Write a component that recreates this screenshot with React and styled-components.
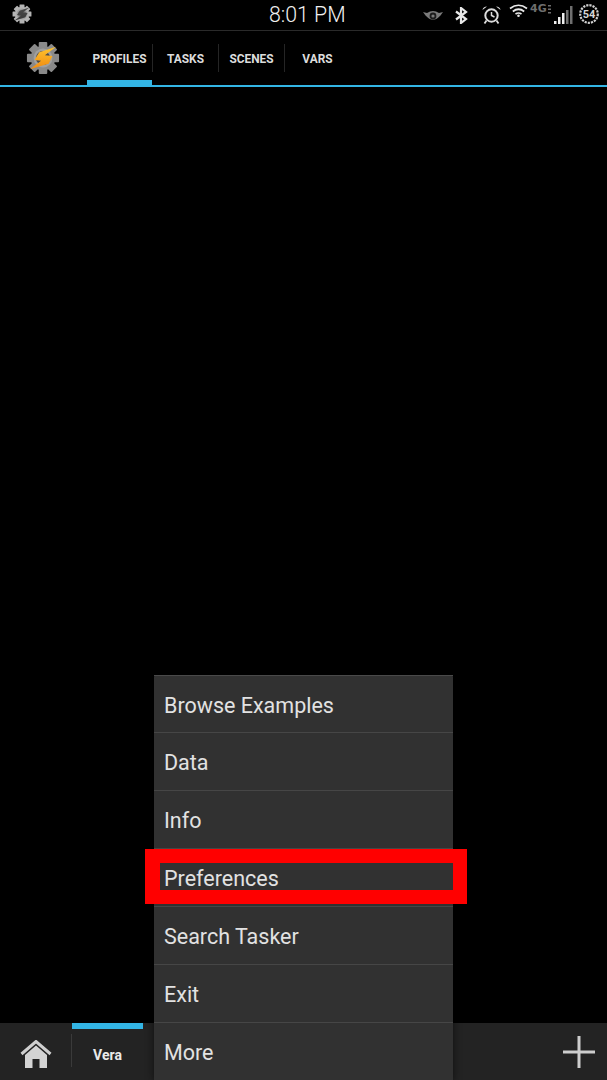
import React from "react"
import styled, { createGlobalStyle } from "styled-components"

const GlobalStyle = createGlobalStyle`
  html, body {
    margin: 0;
    padding: 0;
    background: #000;
    font-family: Roboto, "Noto Sans", sans-serif;
  }
`

const tabs = ["PROFILES", "TASKS", "SCENES", "VARS"]
const menuItems = ["Browse Examples", "Data", "Info", "Preferences", "Search Tasker", "Exit", "More"]

const gearTeeth = [0, 45, 90, 135, 180, 225, 270, 315]

const Gear = ({ size, color, ring, hole }) => (
  <svg width={size} height={size} viewBox="0 0 36 36">
    {gearTeeth.map(a => (
      <rect key={a} x="13.5" y="1" width="9" height="8" rx="1" fill={color} transform={`rotate(${a} 18 18)`} />
    ))}
    <circle cx="18" cy="18" r="13" fill={color} />
    <circle cx="18" cy="18" r="10" fill={ring} />
    <circle cx="18" cy="18" r="7.5" fill={hole} />
  </svg>
)

const Bolt = ({ from, to }) => (
  <BoltSvg viewBox="0 0 36 36">
    <defs>
      <linearGradient id={`bolt${from.slice(1)}`} x1="0" y1="0" x2="0" y2="1">
        <stop offset="0" stopColor={from} />
        <stop offset="1" stopColor={to} />
      </linearGradient>
    </defs>
    <path d="M32 6 L14 12 L9 20 L16 21 L4 30 L24 24 L28 16 L20 15 Z" fill={`url(#bolt${from.slice(1)})`} />
  </BoltSvg>
)

const App = () => (
  <>
    <GlobalStyle />
    <Page>
      <StatusBar>
        <StatusLeft>
          <IconWrap>
            <Gear size={20} color="#b4b4b4" ring="#a0a0a0" hole="#7c7c7c" />
            <Bolt from="#4a4a4a" to="#3a3a3a" />
          </IconWrap>
        </StatusLeft>
        <Clock>8:01 PM</Clock>
        <StatusRight>
          <StatusIcon $gap={0} $top={9} width="20" height="13" viewBox="0 0 20 13">
            <path d="M0 3 L4 4 Q10 0 16 4 L20 3 L17.5 6.5 Q10 15 2.5 6.5 Z" fill="#7a7a7a" />
            <circle cx="10" cy="7" r="3.4" fill="#1c1c1c" />
            <circle cx="10" cy="7" r="1.6" fill="#7a7a7a" />
          </StatusIcon>
          <StatusIcon $gap={12} $top={7} width="13" height="17" viewBox="0 0 13 17">
            <path d="M1 4.5 L11 12 L6 16 L6 1 L11 5 L1 12.5" stroke="#e8e8e8" strokeWidth="2.2" fill="none" />
          </StatusIcon>
          <StatusIcon $gap={14} $top={6} width="19" height="18" viewBox="0 0 19 18">
            <circle cx="9.5" cy="9.5" r="6.2" stroke="#dcdcdc" strokeWidth="2" fill="none" />
            <path d="M9.5 6 V9.5 L12.5 11" stroke="#dcdcdc" strokeWidth="1.5" fill="none" />
            <path d="M0.5 4 Q1 0.5 5 0.5 Z M18.5 4 Q18 0.5 14 0.5 Z" fill="#dcdcdc" />
            <path d="M4.5 14.5 L2.5 17.5 M14.5 14.5 L16.5 17.5" stroke="#dcdcdc" strokeWidth="1.8" />
          </StatusIcon>
          <StatusIcon $gap={8} $top={4} width="19" height="13" viewBox="0 0 19 13">
            <path d="M1 4.5 Q9.5 -2 18 4.5 M3.8 7.5 Q9.5 3 15.2 7.5 M6.5 10 Q9.5 8 12.5 10" stroke="#e8e8e8" strokeWidth="1.7" fill="none" />
            <circle cx="9.5" cy="11.7" r="1.3" fill="#e8e8e8" />
          </StatusIcon>
          <Network>
            4G
            <svg width="3" height="9" viewBox="0 0 3 9">
              <path d="M0 0 H3 V1.5 H0 Z M0 3.5 H3 V5 H0 Z M0 7 H3 V8.5 H0 Z" fill="#6e6e6e" />
            </svg>
          </Network>
          <StatusIcon $gap={2} $top={5} width="19" height="19" viewBox="0 0 19 19">
            <path d="M0 19 h2.5 v-3 h-2.5 Z M4 19 h2.5 v-7 h-2.5 Z M8 19 h2.5 v-11 h-2.5 Z" fill="#eee" />
            <path d="M12 19 h2.5 v-14 h-2.5 Z M16 19 h2.5 v-18 h-2.5 Z" fill="#6f6f6f" />
          </StatusIcon>
          <BatteryBadge>
            <svg width="20" height="20" viewBox="0 0 20 20">
              <circle cx="10" cy="10" r="8.8" stroke="#cfcfcf" strokeWidth="2.2" strokeDasharray="2.2 1" fill="none" />
            </svg>
            <BatteryLevel>54</BatteryLevel>
          </BatteryBadge>
        </StatusRight>
      </StatusBar>

      <ActionBar>
        <AppLogo>
          <IconWrap>
            <Gear size={34} color="#8a8a8a" ring="#a0a0a0" hole="#4a4a4a" />
            <Bolt from="#ffc52e" to="#f08a12" />
          </IconWrap>
        </AppLogo>
        <TabRow>
          {tabs.map((tab, i) => (
            <Tab key={tab} $active={i === 0}>
              <TabLabel $divided={i < tabs.length - 1}>{tab}</TabLabel>
            </Tab>
          ))}
        </TabRow>
      </ActionBar>

      <Content />

      <BottomBar>
        <HomeButton>
          <svg width="32" height="29" viewBox="0 0 32 29">
            <path d="M1.5 14 L16 1.5 L30.5 14" stroke="#cfcfcf" strokeWidth="3" fill="none" />
            <path d="M5 15 L16 5.5 L27 15 V28 H19.5 V19 H12.5 V28 H5 Z" fill="#d4d4d4" />
          </svg>
        </HomeButton>
        <ProjectTab>Vera</ProjectTab>
        <AddButton>
          <svg width="32" height="32" viewBox="0 0 32 32">
            <path d="M16 0 V32 M0 16 H32" stroke="#cdcdcd" strokeWidth="3" />
          </svg>
        </AddButton>
      </BottomBar>

      <Menu>
        {menuItems.map((item, i) => (
          <MenuItem key={item} $first={i === 0}>
            {item}
            {item === "Preferences" && <Highlight />}
          </MenuItem>
        ))}
      </Menu>
    </Page>
  </>
)

const Page = styled.div`
  position: relative;
  display: flex;
  flex-direction: column;
  width: 607px;
  height: 1080px;
  overflow: hidden;
  background: #000;
`

const StatusBar = styled.div`
  display: grid;
  grid-template-columns: 269px auto 1fr;
  align-items: center;
  height: 30px;
  border-bottom: 1px solid #2a2a2a;
`

const StatusLeft = styled.div`
  display: flex;
  margin-top: -2px;
  padding-left: 12px;
`

const StatusRight = styled.div`
  display: flex;
  align-items: flex-start;
  justify-content: flex-end;
  height: 30px;
  padding-right: 8px;
`

const StatusIcon = styled.svg`
  flex-shrink: 0;
  margin-top: ${p => p.$top}px;
  margin-left: ${p => p.$gap}px;
`

const Network = styled.span`
  display: flex;
  align-items: center;
  gap: 1px;
  margin: 4px 0 0 2px;
  width: 22px;
  font-family: "DejaVu Sans", sans-serif;
  font-size: 11px;
  font-weight: 700;
  line-height: 10px;
  color: #6e6e6e;
`

const BatteryBadge = styled.div`
  position: relative;
  display: flex;
  margin: 4px 0 0 6px;
  width: 20px;
  height: 20px;
`

const BatteryLevel = styled.span`
  position: absolute;
  inset: 0;
  display: flex;
  align-items: center;
  justify-content: center;
  font-size: 11px;
  font-weight: 700;
  color: #d8d8d8;
`

const Clock = styled.div`
  font-size: 21.3px;
  font-weight: 300;
  line-height: 30px;
  color: #f0f0f0;
`

const IconWrap = styled.div`
  position: relative;
  display: flex;
`

const BoltSvg = styled.svg`
  position: absolute;
  inset: 0;
`

const ActionBar = styled.div`
  display: flex;
  height: 54px;
  border-bottom: 2px solid #33b5e5;
`

const AppLogo = styled.div`
  display: flex;
  align-items: center;
  justify-content: center;
  width: 87px;
  box-sizing: border-box;
  padding-right: 2px;
`

const TabRow = styled.div`
  display: flex;
`

const Tab = styled.div`
  position: relative;
  display: flex;
  align-items: center;
  width: 66px;
  height: 54px;

  &::after {
    content: "";
    display: ${p => (p.$active ? "block" : "none")};
    position: absolute;
    left: 0;
    right: 1px;
    bottom: 0;
    height: 5px;
    background: #33b5e5;
  }
`

const TabLabel = styled.div`
  display: flex;
  align-items: center;
  justify-content: center;
  width: 100%;
  height: 28px;
  box-sizing: border-box;
  padding-top: 1px;
  border-right: 1px solid ${p => (p.$divided ? "#252525" : "transparent")};
  font-size: 11.9px;
  font-weight: 700;
  color: #dcdcdc;
`

const Content = styled.div`
  flex: 1;
  background: #000;
`

const BottomBar = styled.div`
  display: flex;
  align-items: stretch;
  height: 57px;
  background: #232323;
`

const HomeButton = styled.div`
  position: relative;
  display: flex;
  align-items: center;
  justify-content: center;
  width: 72px;
  padding-top: 5px;
  box-sizing: border-box;

  &::after {
    content: "";
    position: absolute;
    right: 0;
    top: 11px;
    height: 33px;
    width: 1px;
    background: #3a3a3a;
  }
`

const ProjectTab = styled.div`
  display: flex;
  align-items: center;
  justify-content: center;
  width: 71px;
  box-sizing: border-box;
  padding-top: 1px;
  border-top: 6px solid #33b5e5;
  font-size: 14px;
  font-weight: 700;
  color: #eaeaea;
`

const AddButton = styled.div`
  display: flex;
  align-items: center;
  margin-left: auto;
  padding-right: 12px;
`

const Menu = styled.div`
  position: absolute;
  left: 154px;
  top: 675px;
  width: 299px;
  border-radius: 2px 2px 0 0;
  background: #313131;
  box-shadow: 0 0 8px rgba(0, 0, 0, 0.6);
`

const MenuItem = styled.div`
  position: relative;
  display: flex;
  align-items: center;
  height: 58px;
  box-sizing: border-box;
  padding: 2px 0 0 10px;
  border-top: ${p => (p.$first ? "1px solid #4a4a4a" : "none")};
  border-bottom: 1px solid #464646;
  font-size: 21.5px;
  color: #e2e2e2;
`

const Highlight = styled.div`
  position: absolute;
  left: -9px;
  right: -14px;
  top: 0;
  height: 55px;
  box-sizing: border-box;
  border: 14px solid #ff0000;
  border-left-width: 15px;
`

export default App
